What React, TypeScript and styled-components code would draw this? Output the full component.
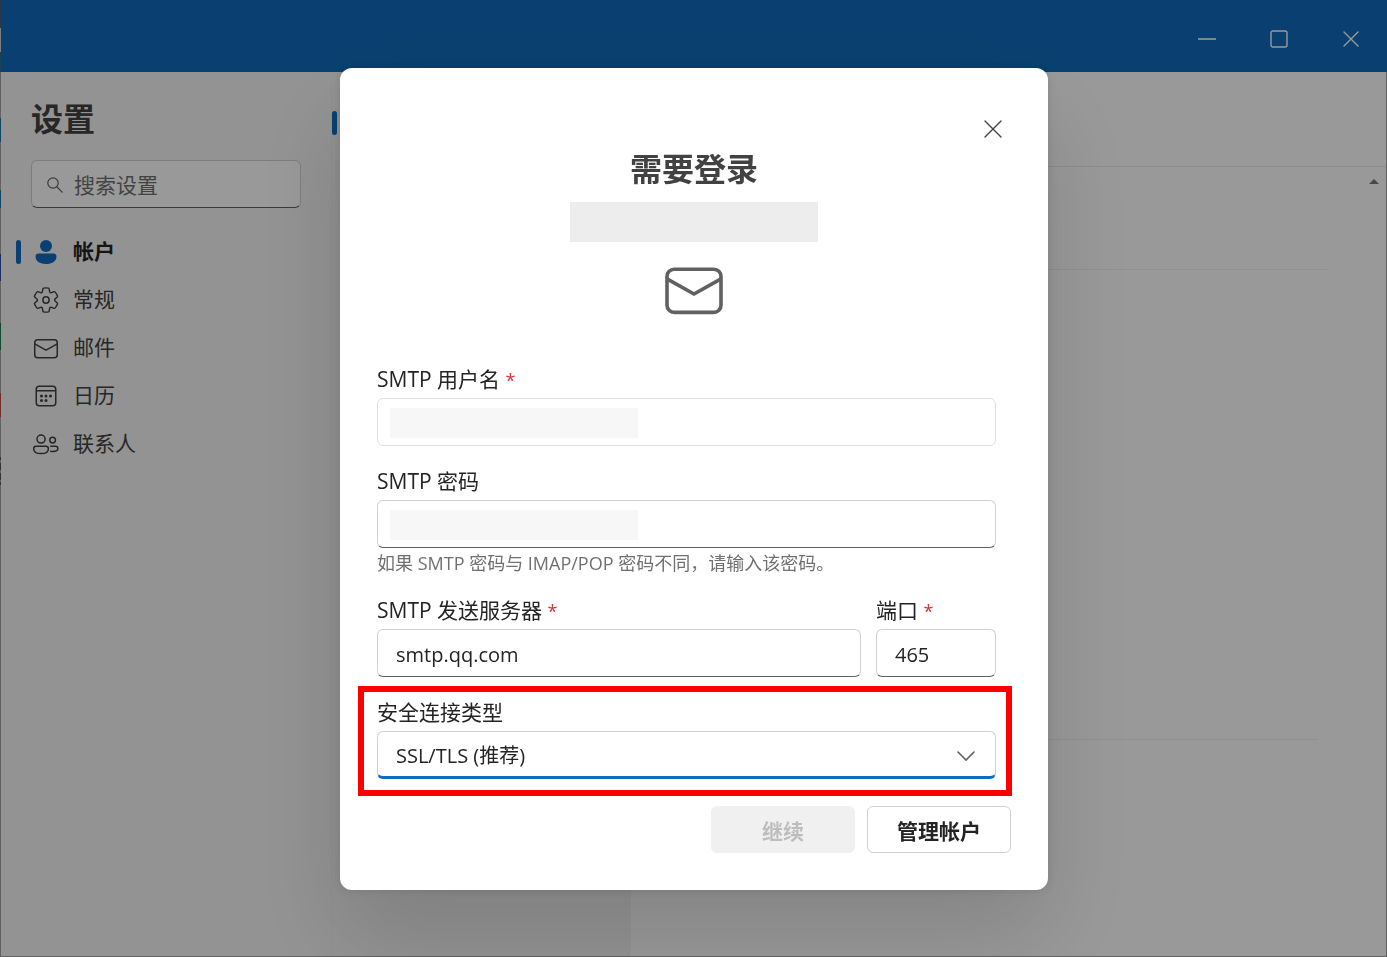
import React from "react";
import styled, { createGlobalStyle, css } from "styled-components";

const GlobalStyle = createGlobalStyle`
  *, *::before, *::after { box-sizing: border-box; }
  body {
    margin: 0;
    color: #242424;
    font-family: "Open Sans", "Noto Sans CJK SC", sans-serif;
    font-size: 21px;
    line-height: 28px;
  }
  button, input, select { font: inherit; color: inherit; }
`;

const Window = styled.div`
  position: relative;
  display: flex;
  flex-direction: column;
  min-height: 100vh;

  /* sliver of the desktop showing past the window's left edge */
  &::before {
    content: "";
    position: absolute;
    top: 0;
    bottom: 0;
    left: 0;
    width: 1px;
    background: linear-gradient(
      #46607a 0 28px, #d0d0d0 28px 52px, #2f6f8f 52px 72px, #a4a4a4 72px 118px,
      #2474a8 118px 142px, #a4a4a4 142px 190px, #2474a8 190px 208px, #a4a4a4 208px 254px,
      #2a4f9c 254px 281px, #a4a4a4 281px 323px, #1f7a4c 323px 350px, #a4a4a4 350px 393px,
      #b8503a 393px 417px, #a4a4a4 417px 457px, #555 457px 460px, #a4a4a4 460px 463px,
      #555 463px 470px, #a4a4a4 470px 473px, #555 473px 480px, #a4a4a4 480px 482px,
      #555 482px 485px, #a4a4a4 485px
    );
  }
`;

const TitleBar = styled.header`
  display: flex;
  justify-content: flex-end;
  height: 72px;
  background: #0f6cbd;
  color: #fff;
`;

const IconButton = styled.button<{ $width: number; $height: number }>`
  display: flex;
  align-items: center;
  justify-content: center;
  width: ${(p) => p.$width}px;
  height: ${(p) => p.$height}px;
  padding: 0;
  border: 0;
  background: none;
`;

const Workspace = styled.div`
  display: flex;
  flex: 1;
  border: 1px solid #a4a4a4;
  border-top: 0;
`;

const Sidebar = styled.aside`
  flex: 0 0 330px;
  min-width: 0;
  padding: 27px 30px;
  background: #f5f5f5;
`;

const PageTitle = styled.h1`
  margin: 0;
  font-size: 32px;
  line-height: 40px;
  color: #424242;
`;

const SearchBox = styled.label`
  display: flex;
  align-items: center;
  gap: 11px;
  height: 48px;
  margin-top: 21px;
  padding: 2px 15px 0;
  border: 1px solid #d1d1d1;
  border-bottom-color: #616161;
  border-radius: 6px;
  background: #fff;
  color: #616161;

  svg { flex-shrink: 0; }
  input {
    width: 100%;
    min-width: 0;
    padding: 0;
    border: 0;
    outline: 0;
    background: none;
  }
  input::placeholder { color: #707070; opacity: 1; }
`;

const Nav = styled.nav`
  display: flex;
  flex-direction: column;
  margin: 20px -15px 0;
`;

const NavLink = styled.a<{ $active?: boolean }>`
  display: flex;
  align-items: center;
  height: 48px;
  gap: 12px;
  color: #424242;
  text-decoration: none;
  ${(p) => p.$active && css`
    color: #242424;
    font-weight: 700;
    svg { color: #0f6cbd; }
  `}
`;

const NavText = styled.span`
  padding-bottom: 2px;
`;

const Marker = styled.span<{ $on: boolean }>`
  width: 5px;
  height: 24px;
  margin-right: -2px;
  border-radius: 3px;
  background: ${(p) => (p.$on ? "#0f6cbd" : "transparent")};
`;

const Categories = styled.section`
  flex: 0 0 300px;
  padding-top: 39px;
  background: #f5f5f5;
  border-left: 1px solid #f0f0f0;
`;

const Detail = styled.main`
  flex: 1;
  display: flex;
  flex-direction: column;
  background: #fff;
`;

const DetailHeader = styled.div`
  height: 95px;
  border-bottom: 1px solid #ececec;
`;

const DetailBody = styled.div`
  display: flex;
  flex: 1;
  justify-content: space-between;
`;

const DetailList = styled.div`
  flex: 1;
  margin-right: 34px;
`;

const DetailRow = styled.div<{ $height: number; $inset?: number }>`
  height: ${(p) => p.$height}px;
  margin-right: ${(p) => p.$inset ?? 0}px;
  border-bottom: 1px solid #f0f0f0;
`;

const ScrollTrack = styled.div`
  display: flex;
  justify-content: center;
  width: 24px;
  padding-top: 12px;
`;

const Overlay = styled.div`
  position: fixed;
  inset: 0;
  display: flex;
  align-items: center;
  justify-content: center;
  padding: 1px 0 0 1px;
  background: rgba(0, 0, 0, 0.4);
`;

const Dialog = styled.div`
  display: flex;
  flex-direction: column;
  width: 100%;
  max-width: 708px;
  padding: 37px;
  border-radius: 12px;
  background: #fff;
  box-shadow: 0 0 12px rgba(0, 0, 0, 0.12), 0 48px 96px rgba(0, 0, 0, 0.14);
`;

const DialogTop = styled.div`
  display: flex;
  justify-content: flex-end;
  color: #424242;
`;

const DialogHead = styled.div`
  display: flex;
  flex-direction: column;
  align-items: center;
`;

const DialogTitle = styled.h2`
  margin: 0;
  font-size: 32px;
  line-height: 32px;
  color: #424242;
`;

const Address = styled.div`
  width: 248px;
  height: 40px;
  margin: 17px 0 11px;
  background: #ededed;
`;

const MailBadge = styled.div`
  display: flex;
  color: #616161;
`;

const Form = styled.form`
  display: flex;
  flex-direction: column;
  gap: 21px;
  margin-top: 40px;
  padding-right: 15px;
`;

const ServerRow = styled.div`
  display: grid;
  grid-template-columns: 1fr 120px;
  gap: 15px;
`;

const FieldBox = styled.div`
  position: relative;
  display: flex;
  flex-direction: column;
`;

const Label = styled.label`
  margin-bottom: 5px;
`;

const Required = styled.span`
  color: #d13438;
  font-size: 18px;
  line-height: 1;
`;

const Control = styled.div`
  position: relative;
  display: flex;
`;

const controlStyle = css`
  width: 100%;
  height: 48px;
  padding: 2px 18px 0;
  border: 1px solid #d1d1d1;
  border-radius: 6px;
  outline: 0;
  background: #fff;
  font-size: 20px;
`;

const TextInput = styled.input<{ $quiet?: boolean }>`
  ${controlStyle}
  border-color: ${(p) => (p.$quiet ? "#e0e0e0" : "#d1d1d1 #d1d1d1 #616161")};
`;

const Select = styled.select`
  ${controlStyle}
  padding-top: 4px;
  appearance: none;
  border-bottom: 3px solid #0f6cbd;
`;

const Chevron = styled.svg`
  position: absolute;
  top: 19px;
  right: 20px;
  color: #616161;
  pointer-events: none;
`;

const Redaction = styled.span`
  position: absolute;
  top: 10px;
  left: 13px;
  width: 248px;
  height: 30px;
  background: #f7f7f7;
`;

const Hint = styled.p`
  margin: 3px 0 0;
  color: #707070;
  font-size: 18px;
  line-height: 24px;
`;

const Highlight = styled.span`
  position: absolute;
  inset: -12px -16px -17px -19px;
  border: 6px solid #f00;
  pointer-events: none;
`;

const Actions = styled.div`
  display: flex;
  justify-content: flex-end;
  gap: 12px;
  margin-top: 27px;
`;

const ActionButton = styled.button`
  width: 144px;
  height: 47px;
  padding: 2px 0 0;
  border: 1px solid #d1d1d1;
  border-radius: 6px;
  background: #fff;
  font-weight: 700;
  &:disabled {
    border-color: #f0f0f0;
    background: #f0f0f0;
    color: #bdbdbd;
  }
`;

const Glyph = ({ size = 30, children }: { size?: number; children: React.ReactNode }) => (
  <svg width={size} height={size} viewBox="0 0 20 20" fill="none" stroke="currentColor" aria-hidden="true">
    {children}
  </svg>
);

const MailShape = () => (
  <>
    <rect x="2.5" y="4.5" width="15" height="12" rx="2" />
    <path d="M2.5 7.2 10 11.4l7.5-4.2" />
  </>
);

const CrossIcon = ({ size, width }: { size: number; width: number }) => (
  <svg width={size} height={size} viewBox={`0 0 ${size} ${size}`} stroke="currentColor" strokeWidth={width} strokeLinecap="round" aria-hidden="true">
    <path d={`M1 1 ${size - 1} ${size - 1}M${size - 1} 1 1 ${size - 1}`} />
  </svg>
);

const navItems = [
  {
    name: "帐户",
    icon: (
      <g fill="currentColor" stroke="none">
        <circle cx="10" cy="6" r="4" />
        <path d="M5 11a2 2 0 0 0-2 2c0 1.7.83 2.97 2.13 3.8A9.14 9.14 0 0 0 10 18c1.85 0 3.58-.39 4.87-1.2A4.35 4.35 0 0 0 17 13a2 2 0 0 0-2-2H5Z" />
      </g>
    ),
  },
  {
    name: "常规",
    icon: (
      <>
        <circle cx="10" cy="10" r="2.1" />
        <path d="M1.91 7.38A8.5 8.5 0 0 1 3.7 4.3a.5.5 0 0 1 .54-.13l1.92.68a1 1 0 0 0 1.32-.76l.36-2a.5.5 0 0 1 .4-.4 8.53 8.53 0 0 1 3.55 0c.2.04.35.2.38.4l.37 2a1 1 0 0 0 1.32.76l1.92-.68a.5.5 0 0 1 .54.13 8.5 8.5 0 0 1 1.78 3.08c.06.2 0 .4-.15.54l-1.56 1.32a1 1 0 0 0 0 1.52l1.56 1.32a.5.5 0 0 1 .15.54 8.5 8.5 0 0 1-1.78 3.08.5.5 0 0 1-.54.13l-1.92-.68a1 1 0 0 0-1.32.76l-.37 2a.5.5 0 0 1-.38.4 8.53 8.53 0 0 1-3.56 0 .5.5 0 0 1-.39-.4l-.36-2a1 1 0 0 0-1.32-.76l-1.92.68a.5.5 0 0 1-.54-.13 8.5 8.5 0 0 1-1.78-3.08.5.5 0 0 1 .15-.54l1.56-1.32a1 1 0 0 0 0-1.52L2.06 7.92a.5.5 0 0 1-.15-.54Z" transform="translate(.5 .5) scale(.95)" />
      </>
    ),
  },
  { name: "邮件", icon: <MailShape /> },
  {
    name: "日历",
    icon: (
      <>
        <rect x="3.5" y="3.5" width="13" height="13" rx="2" />
        <path d="M3.5 6.5h13" />
        <g fill="currentColor" stroke="none">
          <circle cx="7" cy="10" r="1" />
          <circle cx="10" cy="10" r="1" />
          <circle cx="13" cy="10" r="1" />
          <circle cx="7" cy="13" r="1" />
          <circle cx="10" cy="13" r="1" />
        </g>
      </>
    ),
  },
  {
    name: "联系人",
    icon: (
      <>
        <circle cx="6.7" cy="6.7" r="2.7" />
        <circle cx="14.4" cy="7.4" r="1.9" />
        <path d="M3.4 11.5H10a1.6 1.6 0 0 1 1.6 1.6c0 2-1.9 3.3-4.9 3.3s-4.9-1.3-4.9-3.3a1.6 1.6 0 0 1 1.6-1.6Z" />
        <path d="M12.8 11.5h3.6a1.5 1.5 0 0 1 1.5 1.5c0 1.2-1.2 2-3.4 2-.6 0-1.2-.1-1.7-.2" />
      </>
    ),
  },
];

export default function App() {
  return (
    <>
      <GlobalStyle />
      <Window>
        <TitleBar>
          <IconButton $width={72} $height={78} aria-label="最小化">
            <svg width="18" height="2" stroke="currentColor" strokeWidth="1.6"><path d="M0 1h18" /></svg>
          </IconButton>
          <IconButton $width={72} $height={78} aria-label="最大化">
            <svg width="18" height="18" fill="none" stroke="currentColor" strokeWidth="1.4"><rect x="1" y="1" width="16" height="16" rx="2" /></svg>
          </IconButton>
          <IconButton $width={72} $height={78} aria-label="关闭窗口">
            <CrossIcon size={16} width={1.4} />
          </IconButton>
        </TitleBar>
        <Workspace>
          <Sidebar>
            <PageTitle>设置</PageTitle>
            <SearchBox>
              <svg width="16" height="16" fill="none" stroke="currentColor" strokeWidth="1.2" strokeLinecap="round" aria-hidden="true">
                <circle cx="6" cy="6" r="5.2" />
                <path d="m10 10 5.2 5.2" />
              </svg>
              <input type="search" placeholder="搜索设置" aria-label="搜索设置" />
            </SearchBox>
            <Nav>
              {navItems.map((item, i) => (
                <NavLink key={item.name} href="#" $active={i === 0}>
                  <Marker $on={i === 0} />
                  <Glyph>{item.icon}</Glyph>
                  <NavText>{item.name}</NavText>
                </NavLink>
              ))}
            </Nav>
          </Sidebar>
          <Categories>
            <Marker as="div" $on />
          </Categories>
          <Detail>
            <DetailHeader />
            <DetailBody>
              <DetailList>
                <DetailRow $height={103} />
                <DetailRow $height={470} $inset={10} />
              </DetailList>
              <ScrollTrack>
                <svg width="10" height="6" fill="#7a7a7a" aria-hidden="true"><path d="M5 0l5 5H0z" /></svg>
              </ScrollTrack>
            </DetailBody>
          </Detail>
        </Workspace>
      </Window>

      <Overlay>
        <Dialog role="dialog" aria-modal="true" aria-labelledby="dialog-title">
          <DialogTop>
            <IconButton $width={36} $height={48} aria-label="关闭">
              <CrossIcon size={18} width={1.4} />
            </IconButton>
          </DialogTop>
          <DialogHead>
            <DialogTitle id="dialog-title">需要登录</DialogTitle>
            <Address />
            <MailBadge>
              <Glyph size={72}><MailShape /></Glyph>
            </MailBadge>
          </DialogHead>
          <Form id="smtp-form">
            <FieldBox>
              <Label htmlFor="user">SMTP 用户名 <Required>*</Required></Label>
              <Control>
                <TextInput id="user" $quiet />
                <Redaction />
              </Control>
            </FieldBox>
            <FieldBox>
              <Label htmlFor="password">SMTP 密码</Label>
              <Control>
                <TextInput id="password" type="password" />
                <Redaction />
              </Control>
              <Hint>如果 SMTP 密码与 IMAP/POP 密码不同，请输入该密码。</Hint>
            </FieldBox>
            <ServerRow>
              <FieldBox>
                <Label htmlFor="server">SMTP 发送服务器 <Required>*</Required></Label>
                <TextInput id="server" defaultValue="smtp.qq.com" />
              </FieldBox>
              <FieldBox>
                <Label htmlFor="port">端口 <Required>*</Required></Label>
                <TextInput id="port" defaultValue="465" />
              </FieldBox>
            </ServerRow>
            <FieldBox>
              <Label htmlFor="security">安全连接类型</Label>
              <Control>
                <Select id="security">
                  <option>SSL/TLS (推荐)</option>
                </Select>
                <Chevron width="20" height="12" fill="none" stroke="currentColor" strokeWidth="1.6" strokeLinecap="round" aria-hidden="true">
                  <path d="m2 2 8 8 8-8" />
                </Chevron>
              </Control>
              <Highlight />
            </FieldBox>
          </Form>
          <Actions>
            <ActionButton type="submit" form="smtp-form" disabled>继续</ActionButton>
            <ActionButton type="button">管理帐户</ActionButton>
          </Actions>
        </Dialog>
      </Overlay>
    </>
  );
}
